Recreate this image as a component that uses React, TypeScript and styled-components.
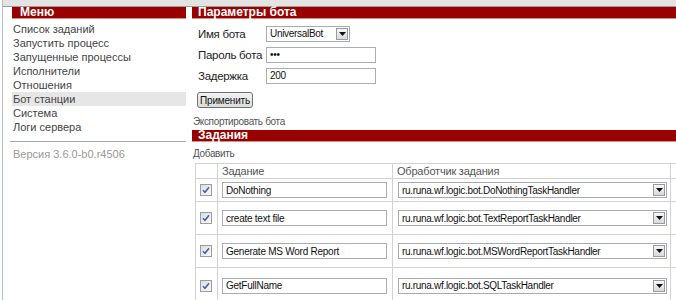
import styled, { createGlobalStyle } from "styled-components";

const GlobalStyle = createGlobalStyle`
  html, body {
    margin: 0;
    padding: 0;
    background: #fff;
  }
  body {
    font-family: Arial, "Liberation Sans", sans-serif;
    overflow: hidden;
  }
`;

const Window = styled.div`
  width: 676px;
  height: 300px;
  overflow: hidden;
  box-sizing: border-box;
  padding-left: 2px;
`;

const Frame = styled.div`
  height: 100%;
  border-left: 1px solid #b3c0cd;
`;

const TopStrip = styled.div`
  height: 6px;
  background: #e3e3e3;
  border-bottom: 1px solid #9c9c9c;
`;

const Columns = styled.div`
  display: flex;
  align-items: flex-start;
`;

const Sidebar = styled.nav`
  width: 174px;
  margin-left: 9px;
  flex-shrink: 0;
`;

const Main = styled.main`
  flex: 1;
  margin-left: 6px;
  min-width: 0;
`;

const SectionBar = styled.div<{ $indent: number }>`
  height: 11px;
  line-height: 11px;
  padding-left: ${(p) => p.$indent}px;
  background: #990000;
  border-bottom: 1px solid #d39191;
  color: #fff;
  font-weight: bold;
  font-size: 12px;
`;

const MenuList = styled.ul`
  list-style: none;
  margin: 3px 0 0;
  padding: 0;
`;

const MenuItem = styled.li<{ $active?: boolean }>`
  height: 14px;
  line-height: 14px;
  padding-left: 1px;
  font-size: 11px;
  color: #444;
  background: ${(p) => (p.$active ? "#e6e6e6" : "transparent")};
`;

const Separator = styled.hr`
  margin: 7px 0 0 -2px;
  border: 0;
  border-top: 1px solid #a8a8a8;
`;

const Version = styled.div`
  margin-top: 5px;
  padding-left: 1px;
  line-height: 14px;
  font-size: 11px;
  color: #9a9a9a;
`;

const FormGrid = styled.div`
  display: grid;
  grid-template-columns: 68px auto;
  grid-auto-rows: 21px;
  align-items: center;
  margin: 4px 0 0 6px;
`;

const Label = styled.span`
  font-size: 11.5px;
  letter-spacing: -0.3px;
  color: #222;
  white-space: nowrap;
`;

const SelectBox = styled.div<{ $width: number }>`
  display: flex;
  align-items: center;
  box-sizing: border-box;
  width: ${(p) => p.$width}px;
  height: 16px;
  border: 1px solid #a5acb5;
  background: #fff;
  padding: 0 1px 0 3px;
  font-size: 10px;
  letter-spacing: -0.3px;
  color: #111;
`;

const SelectText = styled.span`
  flex: 1;
  white-space: nowrap;
  overflow: hidden;
`;

const DropButton = styled.span`
  display: flex;
  align-items: center;
  justify-content: center;
  box-sizing: border-box;
  width: 12px;
  height: 12px;
  border: 1px solid #9a9a9a;
  background: linear-gradient(#f6f6f6, #d9d9d9);
`;

const TextBox = styled.input<{ $width: number }>`
  box-sizing: border-box;
  width: ${(p) => p.$width}px;
  height: 16px;
  margin: 0;
  padding: 0 3px;
  border: 1px solid #abadb3;
  font-family: Arial, "Liberation Sans", sans-serif;
  font-size: 10px;
  letter-spacing: -0.25px;
  color: #111;
  outline: none;
`;

const ApplyButton = styled.button`
  display: block;
  box-sizing: border-box;
  margin: 6px 0 0 5px;
  width: 56px;
  height: 16px;
  padding: 0;
  border: 1px solid #707070;
  border-radius: 3px;
  background: linear-gradient(#f2f2f2, #dcdcdc);
  font-family: Arial, "Liberation Sans", sans-serif;
  font-size: 10px;
  letter-spacing: -0.2px;
  color: #111;
`;

const LinkText = styled.div<{ $top: number }>`
  margin-top: ${(p) => p.$top}px;
  padding-left: 1px;
  line-height: 14px;
  font-size: 10px;
  letter-spacing: -0.35px;
  color: #555;
`;

const BarGap = styled.div`
  margin-top: 1px;
`;

const TaskTable = styled.table`
  margin: 2px 0 0 3px;
  border-collapse: collapse;
  table-layout: fixed;
  width: 500px;
  font-size: 11px;
`;

const Cell = styled.td<{ $height: number; $pad: number }>`
  box-sizing: border-box;
  height: ${(p) => p.$height}px;
  padding: 0 0 0 ${(p) => p.$pad}px;
  border: 1px solid #d2d2d2;
  border-top-color: #c4c4c4;
  vertical-align: middle;
`;

const HeadCell = styled.th`
  box-sizing: border-box;
  height: 15px;
  padding: 0 0 0 4px;
  border: 1px solid #d2d2d2;
  text-align: left;
  font-weight: normal;
  font-size: 11px;
  letter-spacing: -0.2px;
  color: #555;
`;

const CheckBox = styled.span`
  display: flex;
  align-items: center;
  justify-content: center;
  box-sizing: border-box;
  width: 12px;
  height: 12px;
  border: 1px solid #9c9c9c;
  background: linear-gradient(135deg, #dcdcdc, #fbfbfb);
`;

const Arrow = () => (
  <svg width="7" height="4" viewBox="0 0 7 4">
    <path d="M0 0H7L3.5 4Z" fill="#111" />
  </svg>
);

const Check = () => (
  <svg width="8" height="8" viewBox="0 0 8 8">
    <path d="M1 4.2L3 6.3L7 1.3" stroke="#3f65a8" strokeWidth="1.6" fill="none" />
  </svg>
);

const menu = [
  "Список заданий",
  "Запустить процесс",
  "Запущенные процессы",
  "Исполнители",
  "Отношения",
  "Бот станции",
  "Система",
  "Логи сервера",
];

const tasks = [
  { name: "DoNothing", handler: "ru.runa.wf.logic.bot.DoNothingTaskHandler", height: 23 },
  { name: "create text file", handler: "ru.runa.wf.logic.bot.TextReportTaskHandler", height: 33 },
  { name: "Generate MS Word Report", handler: "ru.runa.wf.logic.bot.MSWordReportTaskHandler", height: 33 },
  { name: "GetFullName", handler: "ru.runa.wf.logic.bot.SQLTaskHandler", height: 36 },
];

export default function App() {
  return (
    <>
      <GlobalStyle />
      <Window>
        <Frame>
          <TopStrip />
          <Columns>
            <Sidebar>
              <SectionBar $indent={8}>Меню</SectionBar>
              <MenuList>
                {menu.map((item) => (
                  <MenuItem key={item} $active={item === "Бот станции"}>
                    {item}
                  </MenuItem>
                ))}
              </MenuList>
              <Separator />
              <Version>Версия 3.6.0-b0.r4506</Version>
            </Sidebar>
            <Main>
              <SectionBar $indent={6}>Параметры бота</SectionBar>
              <FormGrid>
                <Label>Имя бота</Label>
                <SelectBox $width={84}>
                  <SelectText>UniversalBot</SelectText>
                  <DropButton>
                    <Arrow />
                  </DropButton>
                </SelectBox>
                <Label>Пароль бота</Label>
                <TextBox $width={110} value="•••" readOnly />
                <Label>Задержка</Label>
                <TextBox $width={110} value="200" readOnly />
              </FormGrid>
              <ApplyButton>Применить</ApplyButton>
              <LinkText $top={7}>Экспортировать бота</LinkText>
              <BarGap>
                <SectionBar $indent={6}>Задания</SectionBar>
              </BarGap>
              <LinkText $top={5}>Добавить</LinkText>
              <TaskTable>
                <colgroup>
                  <col style={{ width: 22 }} />
                  <col style={{ width: 175 }} />
                  <col style={{ width: 278 }} />
                  <col style={{ width: 25 }} />
                </colgroup>
                <thead>
                  <tr>
                    <HeadCell />
                    <HeadCell>Задание</HeadCell>
                    <HeadCell>Обработчик задания</HeadCell>
                    <HeadCell />
                  </tr>
                </thead>
                <tbody>
                  {tasks.map((t) => (
                    <tr key={t.name}>
                      <Cell $height={t.height} $pad={4}>
                        <CheckBox>
                          <Check />
                        </CheckBox>
                      </Cell>
                      <Cell $height={t.height} $pad={4}>
                        <TextBox $width={165} value={t.name} readOnly />
                      </Cell>
                      <Cell $height={t.height} $pad={5}>
                        <SelectBox $width={269}>
                          <SelectText>{t.handler}</SelectText>
                          <DropButton>
                            <Arrow />
                          </DropButton>
                        </SelectBox>
                      </Cell>
                      <Cell $height={t.height} $pad={0} />
                    </tr>
                  ))}
                </tbody>
              </TaskTable>
            </Main>
          </Columns>
        </Frame>
      </Window>
    </>
  );
}
